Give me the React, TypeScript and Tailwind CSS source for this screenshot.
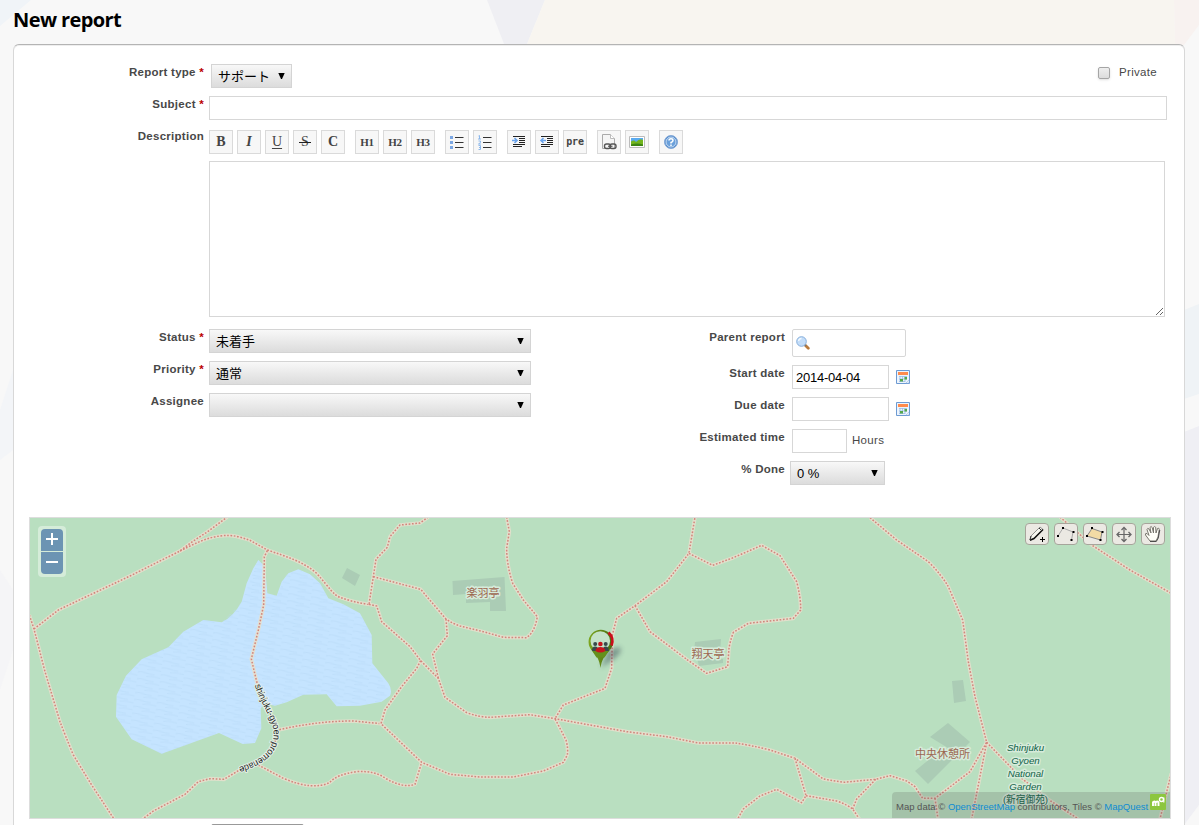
import React from "react";

const trails: { at: string; d: string[] }[] = [
  {
    at: "translate(20 505) scale(.33333)",
    d: [
      "M28,330 L42,372 L75,500 L120,650 Q135,690 160,750 L215,840 L282,942",
      "M42,372 L115,315 L330,213 L480,138 L520,108 L560,82 L622,36",
      "M480,138 C520,118 560,97 600,93 C640,87 665,98 690,106 L742,135 C800,155 850,170 890,205 C930,250 940,270 960,277 Q1000,292 1047,298",
      "M742,137 L733,155 L731,300 L715,375 L694,462 L710,530 L740,600 L765,655 L770,700 L745,745 L715,772 L655,797 L612,823 L570,821 L535,830 L495,868 L400,918 L368,942",
      "M778,674 C850,658 920,648 1000,648 L1083,656",
      "M715,780 L790,820 Q880,858 930,832 Q950,808 1010,800 Q1065,796 1100,822 Q1150,850 1185,838 L1205,772",
    ],
  },
  {
    at: "translate(350 505) scale(.33333)",
    d: [
      "M235,36 L210,54 L150,60 L120,95 L112,127 L78,163 L70,215 L57,298",
      "M70,215 L212,253 L288,342 Q310,357 330,363 L400,380 L460,397 L530,398 Q555,380 562,335 L520,285 L488,235 Q470,180 470,130 L478,80 L470,36",
      "M288,342 L292,392 L248,447 L265,520",
      "M57,298 L80,303 L95,350 L180,425 L212,467 L265,520 L285,577 L350,623 Q390,637 420,637 L540,629 L615,641 L830,680 L950,695 L1045,714 L1155,714 Q1200,720 1260,735 L1335,760",
      "M212,467 L200,490 L155,545 L105,615 L93,656 L215,772 L300,808 L390,816 L490,816 L580,798 L640,772 L652,750 Q655,730 648,705 L615,641 L640,600 L765,550 L785,490 L787,390 L800,340 L855,302 L950,230 L1017,145 L1035,36",
      "M855,302 L900,380 L1010,463",
    ],
  },
  {
    at: "translate(680 505) scale(.33333)",
    d: [
      "M27,145 L98,181 L160,158 L245,121 L300,152 L350,230 Q363,280 362,315 L340,340 L205,355 L160,382 Q150,410 147,430 L143,485 L80,505 L20,463",
      "M570,38 L650,105 L745,170 Q785,210 805,245 L848,345 L865,470 L885,575 L920,712 L870,800 L765,880 L728,880 L705,845 L680,828 L630,812 L587,823 L490,832 L430,822 L345,760",
      "M345,760 L378,872 L365,893 L290,853 L240,873 L190,912 L173,942",
      "M378,872 L470,888 Q500,898 518,912 L538,942",
      "M587,823 L530,882 L518,912",
      "M765,880 L774,942",
      "M920,712 L875,942",
      "M920,712 L1025,820 L1100,880 L1195,942",
      "M1474,805 L1440,942",
      "M1140,36 L1235,120 L1350,195 L1474,265",
    ],
  },
];

const haloText = {
  stroke: "#d6ebda",
  strokeWidth: 3,
  strokeLinejoin: "round" as const,
  paintOrder: "stroke" as const,
};

function MapDrawing() {
  return (
    <svg className="block h-[300px] w-[1140px]" viewBox="30 518 1140 300">
      <defs>
        <pattern id="waves" width="23" height="7" patternUnits="userSpaceOnUse" patternTransform="rotate(8)">
          <path d="M0 2q4-1 8 0t9 1M9 5.500q5-1 9-.5t5 .5" fill="none" stroke="#b8d9f6" strokeWidth=".7" opacity=".8" />
        </pattern>
        <path id="promenade" d="M704,541 C719,588 745,622 759,668 C769,727 733,768 640,791" />
        <linearGradient id="pin" x1="0" x2="1">
          <stop offset="0" stopColor="#7ea620" />
          <stop offset="1" stopColor="#466c12" />
        </linearGradient>
        <filter id="soft" x="-50%" y="-50%" width="200%" height="200%">
          <feGaussianBlur stdDeviation="2.500" />
        </filter>
      </defs>
      <rect x="30" y="518" width="1140" height="300" fill="#b9dfc0" />
      <g transform="translate(20 505) scale(.33333)">
        <path
          id="lake"
          fill="#c5e4ff"
          d="M715,165 L735,185 L742,265 L770,272 L785,230 L805,205 L835,193 L870,208 L900,235 L925,280 L970,298 L1020,325 L1055,390 L1057,475 L1105,535 Q1118,555 1110,572 L1085,590 L1020,602 L950,604 L920,568 L850,569 L800,592 L765,602 L735,595 L722,610 L724,670 L705,714 L668,717 L597,684 L425,746 L335,703 L288,635 L290,570 L318,512 L365,463 L445,427 L490,380 L550,345 L605,352 Q640,335 665,290 L680,235 L700,190Z"
        />
      </g>
      <path
        fill="url(#waves)"
        d="M258 560L265 566L267 593L277 596L288 570L298 569L320 583L328 598L343 604L360 613L372 635L372 663L390 692L380 702L337 706L327 694L303 695L275 706L261 708L261 728L255 743L243 744L219 733L162 754L132 739L116 717L117 695L126 676L142 659L168 647L183 632L203 620L222 622L242 602Z"
      />
      <g fill="#abccb5">
        <path d="M347 568l13 7-5 11-13-8z" />
        <path d="M452.500 581l52-4 1.500 34h-16v-9l-24 1v-9l-13 1z" />
        <path d="M695 642l26-3-1 13h-26zM697 658l26 1v4l-24 3z" />
        <path d="M952 681l11-1 3 21-12 2z" />
        <path d="M948 723l22 19-9 9h-8l-23-14z" />
        <path d="M915 771l16-13 21 2-24 24z" />
      </g>
      {trails.map((group) => (
        <g key={group.at} transform={group.at} fill="none" strokeLinejoin="round">
          {group.d.map((d) => (
            <path key={d} d={d} stroke="#e8dfcc" strokeWidth="11" opacity=".85" />
          ))}
          {group.d.map((d) => (
            <path key={d + "dots"} d={d} stroke="#d2857c" strokeWidth="4.500" strokeDasharray="5 5" />
          ))}
        </g>
      ))}
      <g transform="translate(20 505) scale(.33333)" fontFamily="Liberation Sans, sans-serif" fontSize="28">
        <text fill="#222" stroke="#e4efe6" strokeWidth="6" paintOrder="stroke">
          <textPath href="#promenade" textLength="314" lengthAdjust="spacing">
            shinjuku-gyoen promenade
          </textPath>
        </text>
      </g>
      <g fontFamily="Noto Sans CJK JP, sans-serif" fontSize="11" fill="#9c6650" textAnchor="middle" style={haloText}>
        <text x="483" y="596.500">楽羽亭</text>
        <text x="708" y="657.500">翔天亭</text>
        <text x="942.500" y="757.500">中央休憩所</text>
      </g>
      <g
        fontFamily="Liberation Sans, Noto Sans CJK JP, sans-serif"
        fontSize="9.700"
        fontStyle="italic"
        fill="#0f6248"
        textAnchor="middle"
        style={haloText}
      >
        <text x="1025.500" y="751">Shinjuku</text>
        <text x="1025.500" y="764">Gyoen</text>
        <text x="1025.500" y="777">National</text>
        <text x="1025.500" y="790">Garden</text>
        <text x="1025.500" y="803" fontStyle="normal">(新宿御苑)</text>
      </g>
      <path d="M601 668l7-18 12-3q3 5-6 12z" fill="#234" opacity=".4" filter="url(#soft)" />
      <g transform="translate(0 -1)">
        <path d="M600.500 669c-1-8-4-13-8-17a12.200 12.200 0 1 1 16.500 0c-4 4-7.500 9-8.500 17z" fill="url(#pin)" />
        <circle cx="600.300" cy="642" r="9.800" fill="#c4e2c9" />
        <path d="M608.500 633.500a11.400 11.400 0 0 1 3 13" fill="none" stroke="#c90f1c" strokeWidth="2.800" />
        <path d="M590.500 649.500q10 5 20 0l-6 9h-8z" fill="#64901b" />
        <g fill="#38494a">
          <circle cx="595.200" cy="645" r="2" />
          <circle cx="605.700" cy="645" r="2" />
          <path d="M592 651q0-3.500 3.200-3.500t3 3.500v1h-6zM602.700 651q0-3.500 3-3.500t3.200 3.500v1h-6z" />
        </g>
        <circle cx="600.400" cy="645" r="2.300" fill="#c5141c" />
        <path d="M595.400 652q.5-4 5-4t5 4q-5 3-10 0z" fill="#c5141c" />
      </g>
    </svg>
  );
}

function Label({ text, required, className }: { text: string; required?: boolean; className: string }) {
  return (
    <label
      className={`shrink-0 text-right text-[11.5px] leading-4 font-bold tracking-[0.27px] whitespace-pre text-[#484848] ${className}`}
    >
      {text}
      {required && <span className="text-[#bb0000]"> *</span>}
    </label>
  );
}

function Select({ value, className }: { value: string; className: string }) {
  return (
    <div
      className={`flex h-6 items-center justify-between border border-[#d4d4d4] bg-gradient-to-b from-[#f8f8f8] to-[#dcdcdc] pr-[6px] pl-[6px] text-[13px] text-black ${className}`}
    >
      <span className="pt-[2px]">{value}</span>
      <svg className="mb-px h-[6px] w-[7px]" viewBox="0 0 7 6">
        <path d="M.3 0h6.400L4 6H3z" />
      </svg>
    </div>
  );
}

function Box({ className, value }: { className: string; value?: string }) {
  return (
    <input
      readOnly
      value={value ?? ""}
      className={`shrink-0 border border-[#d7d7d7] bg-white px-[3px] text-[13px] tracking-[-0.25px] text-black outline-none ${className}`}
    />
  );
}

function Tool({ children, gap }: { children: React.ReactNode; gap?: boolean }) {
  return (
    <button
      className={`flex h-6 w-6 items-center justify-center border border-[#dadada] bg-[#f7f7f7] font-['Liberation_Serif',serif] text-[14px] leading-none font-bold text-[#444] ${gap ? "ml-[10px]" : "ml-1 first:ml-0"}`}
    >
      {children}
    </button>
  );
}

function ListIcon({ numbered }: { numbered?: boolean }) {
  return (
    <svg className="h-4 w-4" viewBox="0 0 16 16">
      <path d="M6 3.500h8.500M6 8.500h8.500M6 13.500h8.500" stroke="#333" />
      {numbered ? (
        <path
          d="M1.500 2l1-.5v3.500M1 5h3M1.500 7h2v1.500l-2 1.500h2.500M1.500 11.500h2v4h-2M2 13.500h1.500"
          fill="none"
          stroke="#7fb0ea"
          strokeWidth=".9"
        />
      ) : (
        <path d="M1 2h3v3H1zM1 7h3v3H1zM1 12h3v3H1z" fill="#7ba7e4" />
      )}
    </svg>
  );
}

function IndentIcon({ out }: { out?: boolean }) {
  return (
    <svg className="h-4 w-4" viewBox="0 0 16 16">
      <path d="M2 2.500h12M8 4.500h6M8 6.500h6M8 8.500h6M2 10.500h12M2 12.500h9" stroke="#222" />
      {out ? (
        <path d="M7 6.500H2M4.500 4L2 6.500 4.500 9" fill="none" stroke="#6ba4ec" strokeWidth="1.600" />
      ) : (
        <path d="M1 6.500h5M3.500 4L6 6.500 3.500 9" fill="none" stroke="#6ba4ec" strokeWidth="1.600" />
      )}
    </svg>
  );
}

function CalendarIcon() {
  return (
    <svg className="mt-[5px] ml-[7px] h-[14px] w-[14px]" viewBox="0 0 14 14">
      <path d="M.5.5h13v13H.5z" fill="#edf4fc" stroke="#6d9ad2" />
      <path d="M2 2h10v3H2z" fill="#ff8b4c" />
      <path d="M3 6.500h8M3 9h8M3 11.500h6M4 6v6M6.500 6v6M9 6v6" stroke="#9bbce5" strokeWidth=".8" />
      <path d="M4 9h3v2.500H4zM8.500 7h2.500v2.500H8.500z" fill="#55a84a" />
      <path d="M10 13l3-3v3z" fill="#fff" stroke="#8db2e0" strokeWidth=".5" />
    </svg>
  );
}

function MapTool({ children }: { children: React.ReactNode }) {
  return (
    <div className="flex h-[22px] w-6 items-center justify-center rounded-[4px] border border-[#a6a59b] bg-[#ebe9e3]">
      <svg className="h-5 w-[22px]" viewBox="0 0 22 20" fill="none">
        {children}
      </svg>
    </div>
  );
}

export default function App() {
  return (
    <div className="relative h-[825px] w-[1199px] overflow-hidden bg-[#f8f8f8] font-['Liberation_Sans','Noto_Sans_CJK_JP',sans-serif]">
      <svg className="absolute inset-0 h-[825px] w-[1199px]" viewBox="0 0 1199 825">
        <path d="M0 0h31L0 26z" fill="#f0f4f8" />
        <path d="M487 0h58l-18 44h-23z" fill="#efeff3" />
        <path d="M545 0h629l1 44H527z" fill="#f8f5f0" />
        <path d="M1174 0h25v25l-15 20h-9z" fill="#f8f2f0" />
        <path d="M1184 310l15-6v90l-15 5z" fill="#eff3f6" />
        <path d="M1184 432l15-6v379l-15 20z" fill="#efeff4" />
        <path d="M0 410l13-40v80L0 460z" fill="#f3f5f8" />
        <path d="M0 570l13 20v60L0 690z" fill="#f5f5f7" />
      </svg>

      <div className="relative flex h-[825px] flex-col pl-[13px]">
        <h1 className="h-11 shrink-0 pt-[6px] font-['Open_Sans',sans-serif] text-[20px] leading-7 font-bold tracking-[-0.6px] text-black">
          New report
        </h1>

        <main className="flex h-[900px] w-[1172px] shrink-0 flex-col rounded-t-[6px] border border-[#d8d8d8] border-t-[#b4b4b4] bg-white pt-[19px] shadow-[inset_0_1px_0_#eeeeee]">
          <div className="flex h-8">
            <Label text="Report type" required className="w-[190px]" />
            <Select value="サポート" className="ml-[7px] w-[81px]" />
            <div className="ml-auto flex h-4 items-center pr-[27px] text-[11.5px] tracking-[0.3px] text-[#484848]">
              <span className="mt-[2px] mr-[9px] h-3 w-3 rounded-[2px] border border-[#a5a5a5] bg-gradient-to-b from-[#eee] to-[#dcdcdc] shadow-sm" />
              <span className="pt-px">Private</span>
            </div>
          </div>

          <div className="flex h-8">
            <Label text="Subject" required className="w-[190px]" />
            <Box className="ml-[5px] h-6 w-[958px]" />
          </div>

          <div className="flex h-[201px]">
            <Label text="Description" className="w-[190px]" />
            <div className="ml-[5px] flex flex-col pt-[2px]">
              <div className="flex">
                <Tool>B</Tool>
                <Tool><span className="italic">I</span></Tool>
                <Tool><span className="font-normal underline underline-offset-2">U</span></Tool>
                <Tool>
                  <span className="relative font-normal">
                    S
                    <svg className="absolute top-[7px] -left-[2px] h-px w-3" viewBox="0 0 12 1">
                      <path d="M0 .5h12" stroke="#222" />
                    </svg>
                  </span>
                </Tool>
                <Tool>C</Tool>
                <Tool gap><span className="text-[11px] tracking-[-0.4px]">H1</span></Tool>
                <Tool><span className="text-[11px] tracking-[-0.4px]">H2</span></Tool>
                <Tool><span className="text-[11px] tracking-[-0.4px]">H3</span></Tool>
                <Tool gap><ListIcon /></Tool>
                <Tool><ListIcon numbered /></Tool>
                <Tool gap><IndentIcon /></Tool>
                <Tool><IndentIcon out /></Tool>
                <Tool><span className="font-['DejaVu_Sans_Mono',monospace] text-[10px] tracking-[-0.2px]">pre</span></Tool>
                <Tool gap>
                  <svg className="h-4 w-4" viewBox="0 0 16 16" fill="none">
                    <path d="M1.500.5h8l4 4v10h-12z" fill="#f5f5f5" stroke="#aaa" />
                    <path d="M9.500.5v4h4" fill="#fff" stroke="#bbb" />
                    <rect x="3.500" y="10" width="6" height="4.500" rx="2" stroke="#555" strokeWidth="1.400" />
                    <rect x="9" y="10" width="6" height="4.500" rx="2" stroke="#555" strokeWidth="1.400" />
                    <path d="M7 12.250h4.500" stroke="#555" strokeWidth="1.200" />
                  </svg>
                </Tool>
                <Tool>
                  <svg className="h-4 w-4" viewBox="0 0 16 16">
                    <path d="M.5 2.500h15v11H.5z" fill="#fff" stroke="#bbb" />
                    <path d="M2 4h12v8H2z" fill="#59aaf0" />
                    <path d="M2 7.500q3-2 5 .5 4-4 7-2V12H2z" fill="#72b51e" />
                    <path d="M2 10.500q6-2 12 0V12H2z" fill="#3d8414" />
                  </svg>
                </Tool>
                <Tool gap>
                  <svg className="h-4 w-4" viewBox="0 0 16 16" fill="none">
                    <circle cx="8" cy="8" r="6.500" fill="#4c86c8" stroke="#84a9d8" />
                    <circle cx="8" cy="8" r="5" fill="#6aa0db" stroke="#e2eefa" strokeWidth=".8" />
                    <path d="M6 6.500Q6 4.700 8 4.700t2 1.700Q10 7.500 8 8.500v1M8 10.500V12" stroke="#fff" strokeWidth="1.500" />
                  </svg>
                </Tool>
              </div>
              <div className="relative mt-[7px] h-[156px] w-[956px]">
                <textarea readOnly className="block h-[156px] w-[956px] resize-none border border-[#d7d7d7] bg-white outline-none" />
                <svg className="absolute right-[2px] bottom-[2px] h-[7px] w-[7px]" viewBox="0 0 7 7">
                  <path d="M0 7L7 0M4 7l3-3" stroke="#555" strokeWidth=".9" />
                </svg>
              </div>
            </div>
          </div>

          <div className="flex h-[188px] shrink-0">
            <div className="flex w-[590px] flex-col">
              <div className="flex h-8">
                <Label text="Status" required className="w-[190px]" />
                <Select value="未着手" className="ml-[5px] w-[322px]" />
              </div>
              <div className="flex h-8">
                <Label text="Priority" required className="w-[190px]" />
                <Select value="通常" className="ml-[5px] w-[322px]" />
              </div>
              <div className="flex h-8">
                <Label text="Assignee" className="w-[190px]" />
                <Select value="" className="ml-[5px] w-[322px]" />
              </div>
            </div>
            <div className="flex flex-col">
              <div className="flex h-9">
                <Label text="Parent report" className="w-[181px]" />
                <div className="ml-[7px] flex h-7 w-[114px] items-center rounded-[2px] border border-[#d7d7d7] pl-[3px]">
                  <svg className="h-[14px] w-[14px]" viewBox="0 0 14 14">
                    <path d="M9 9l3.300 3.300" stroke="#b97a3b" strokeWidth="2.800" strokeLinecap="round" />
                    <path d="M8 8l2 2" stroke="#777" strokeWidth="1.500" />
                    <circle cx="5.500" cy="5.500" r="4.800" fill="#c3ddf9" stroke="#86aedb" />
                    <path d="M2.500 5q.5-2.500 3-2.500" stroke="#f3faff" fill="none" strokeWidth="1.300" />
                  </svg>
                </div>
              </div>
              <div className="flex h-8">
                <Label text="Start date" className="w-[181px]" />
                <Box className="ml-[7px] h-6 w-[97px]" value="2014-04-04" />
                <CalendarIcon />
              </div>
              <div className="flex h-8">
                <Label text="Due date" className="w-[181px]" />
                <Box className="ml-[7px] h-6 w-[97px]" />
                <CalendarIcon />
              </div>
              <div className="flex h-8">
                <Label text="Estimated time" className="w-[181px]" />
                <Box className="ml-[7px] h-6 w-[55px]" />
                <span className="ml-[5px] pt-[3px] text-[11.5px] leading-4 tracking-[0.3px] text-[#484848]">Hours</span>
              </div>
              <div className="flex h-8">
                <Label text="% Done" className="w-[181px]" />
                <Select value="0 %" className="ml-[5px] w-[95px]" />
              </div>
            </div>
          </div>

          <section className="relative ml-[15px] h-[302px] w-[1142px] shrink-0 border border-[#ddd]">
            <MapDrawing />
            <div className="absolute top-2 left-2 flex flex-col gap-px rounded-[4px] bg-white/40 p-[3px]">
              <div className="flex h-[22px] w-[22px] items-center justify-center rounded-t-[4px] bg-[#6c94b3]">
                <svg className="mb-[2px] h-3 w-3" viewBox="0 0 12 12"><path d="M0 6h12M6 0v12" stroke="#fff" strokeWidth="2" /></svg>
              </div>
              <div className="flex h-[22px] w-[22px] items-center justify-center rounded-b-[4px] bg-[#6c94b3]">
                <svg className="h-3 w-3" viewBox="0 0 12 12"><path d="M0 5h12" stroke="#fff" strokeWidth="2" /></svg>
              </div>
            </div>
            <div className="absolute top-[5px] right-[5px] flex gap-[5px]">
              <MapTool>
                <path d="M4 16l1-4 9-9 3 2.500-9 9z" fill="#f6f6ef" stroke="#777" strokeWidth=".8" />
                <path d="M17 5.500l-9 9-4 1.800" stroke="#111" strokeWidth="1.500" />
                <path d="M4 16l1-4M13 4l3 3" stroke="#333" />
                <path d="M16.500 13v5M14 15.500h5" stroke="#000" />
              </MapTool>
              <MapTool>
                <path d="M3 12L8 4l10 4-1.500 8" stroke="#aaa" />
                <path d="M2 11h2v2H2zM7 3h2v2H7zM17.500 7h2v2h-2zM15.500 15h2v2h-2z" fill="#000" />
              </MapTool>
              <MapTool>
                <path d="M3 12L8 4.500l10 3.500-1.500 8z" fill="#f3dba5" stroke="#888" />
                <path d="M2 11h2v2H2zM7 3h2v2H7zM17.500 7h2v2h-2zM15.500 15h2v2h-2z" fill="#000" />
              </MapTool>
              <MapTool>
                <path d="M11 4v13M4.500 10.500h13" stroke="#666" strokeWidth="1.200" />
                <path d="M8.500 6L11 3.500 13.500 6M8.500 15l2.500 2.500 2.500-2.500M6.500 8L4 10.500 6.500 13M15.500 8l2.500 2.500-2.500 2.500" stroke="#666" strokeWidth="1.300" />
              </MapTool>
              <MapTool>
                <path
                  d="M8 17L3.500 11q-.5-2 1.500-1.500l2 2L5 5.500q.5-2 2-.5l2 4-1-5.500q1-2 2.200 0L11.500 9V3.300q1.200-1.500 2.200 0L14 9l1.500-4.500q1.500-1 1.800.8-.8 4-1.300 7.700L14 17z"
                  fill="#fffff8"
                  stroke="#77756d"
                />
                <path d="M17.800 6l-1.500 8-2 3.500H8" stroke="#333" strokeWidth=".8" />
              </MapTool>
            </div>
            <div className="absolute right-0 bottom-0 flex h-[26px] w-[278px] rounded-tl-[4px] bg-[#505050]/20 pl-1">
              <span className="pt-[7px] text-[9.5px] leading-4 whitespace-nowrap text-[#555]">
                Map data © <span className="text-[#0f8cd2]">OpenStreetMap</span> contributors, Tiles ©{" "}
                <span className="text-[#0f8cd2]">MapQuest</span>
              </span>
              <svg className="absolute top-[2px] right-[4px] h-4 w-4" viewBox="0 0 16 16" fill="none">
                <rect width="16" height="16" rx="1" fill="#8cc63f" />
                <path d="M3 12V7.500M3 8.500q2-2 2.500 0V12M5.500 8.500q2.500-2 3 0V12" stroke="#fff" strokeWidth="1.900" />
                <circle cx="11.500" cy="5.500" r="2" stroke="#fff" strokeWidth="1.400" />
                <path d="M13.800 3.500v5" stroke="#fff" strokeWidth="1.200" />
              </svg>
            </div>
          </section>

          <div className="mt-[5px] ml-[197px] h-6 w-[93px] shrink-0 rounded-[2px] border border-[#999] bg-[#eee]" />
        </main>
      </div>
    </div>
  );
}
